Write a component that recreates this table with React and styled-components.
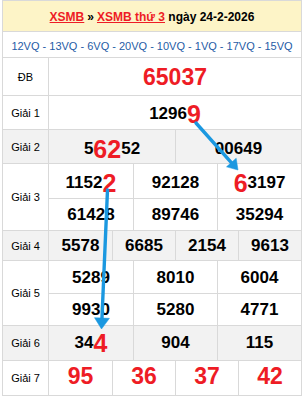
import React from 'react';
import styled, { createGlobalStyle } from 'styled-components';

const Global = createGlobalStyle`
  html, body { margin: 0; padding: 0; background: #fff; }
  body { font-family: "Liberation Sans", Arial, sans-serif; color: #000; }
`;

const BORDER = '#d9d9d9';
const RED = '#ee1c25';

const Page = styled.div`
  position: relative;
  width: 304px;
  height: 396px;
  overflow: hidden;
`;

const Board = styled.div`
  margin-left: 2px;
  width: 300px;
  box-sizing: border-box;
  border: 1px solid ${BORDER};
  border-bottom: none;
`;

const Header = styled.div`
  height: 31px;
  box-sizing: border-box;
  padding-top: 2px;
  background: #fdf4c7;
  border-bottom: 1px solid ${BORDER};
  display: flex;
  align-items: center;
  justify-content: center;
  font-size: 12px;
  font-weight: bold;
  white-space: nowrap;
`;

const Link = styled.a`
  color: ${RED};
  text-decoration: underline;
`;

const Sep = styled.span`
  margin: 0 3px;
`;

const Codes = styled.div`
  height: 26px;
  box-sizing: border-box;
  padding-top: 2px;
  border-bottom: 1px solid ${BORDER};
  display: flex;
  align-items: center;
  justify-content: center;
  font-size: 11px;
  color: #1f5ca6;
  white-space: nowrap;
`;

const Row = styled.div`
  display: flex;
  height: ${p => p.$h}px;
  box-sizing: border-box;
  border-bottom: 1px solid ${BORDER};
  background: ${p => (p.$alt ? '#f2f2f2' : '#fff')};
`;

const Label = styled.div`
  width: 46px;
  flex: none;
  box-sizing: border-box;
  border-right: 1px solid ${BORDER};
  display: flex;
  align-items: center;
  justify-content: center;
  font-size: 11px;
`;

const Body = styled.div`
  flex: 1;
  display: flex;
  flex-direction: column;
`;

const Line = styled.div`
  display: grid;
  grid-template-columns: repeat(${p => p.$cols}, 1fr);
  height: ${p => p.$h}px;
  box-sizing: border-box;
  & + & {
    border-top: 1px solid ${BORDER};
  }
`;

const Cell = styled.div`
  display: flex;
  align-items: center;
  justify-content: center;
  box-sizing: border-box;
  font-size: ${p => (p.$big ? 23 : 17)}px;
  color: ${p => (p.$big ? RED : '#000')};
  font-weight: bold;
  line-height: 20px;
  white-space: nowrap;
  padding-top: ${p => (p.$shift > 0 ? p.$shift : 0)}px;
  padding-bottom: ${p => (p.$shift < 0 ? -p.$shift : 0)}px;
  & + & {
    border-left: 1px solid ${BORDER};
  }
`;

const Hot = styled.span`
  font-size: 25px;
  color: ${RED};
  line-height: 0;
`;

const Overlay = styled.svg`
  position: absolute;
  left: 0;
  top: 0;
  pointer-events: none;
`;

function Num({ v }) {
  const parts = v.split(/(\[[^\]]+\])/).filter(Boolean);
  return (
    <>
      {parts.map((p, i) =>
        p.startsWith('[') ? <Hot key={i}>{p.slice(1, -1)}</Hot> : <span key={i}>{p}</span>
      )}
    </>
  );
}

function Arrow({ x1, y1, x2, y2, len = 10, half = 6.5 }) {
  const dx = x2 - x1;
  const dy = y2 - y1;
  const l = Math.hypot(dx, dy);
  const ux = dx / l;
  const uy = dy / l;
  const bx = x2 - ux * len;
  const by = y2 - uy * len;
  const nx = -uy;
  const ny = ux;
  const pts = `${x2},${y2} ${bx + nx * half},${by + ny * half} ${bx - nx * half},${by - ny * half}`;
  return (
    <g fill="#1b98e0" stroke="#1b98e0">
      <line x1={x1} y1={y1} x2={bx + ux} y2={by + uy} strokeWidth="3.4" strokeLinecap="round" />
      <polygon points={pts} strokeWidth="0.5" strokeLinejoin="round" />
    </g>
  );
}

const prizes = [
  { label: 'ĐB', h: 38, alt: false, big: true, lines: [{ h: 37, shift: 0, vals: ['65037'] }] },
  { label: 'Giải 1', h: 34, alt: false, lines: [{ h: 33, shift: 3, vals: ['1296[9]'] }] },
  { label: 'Giải 2', h: 34, alt: true, lines: [{ h: 33, shift: 5, vals: ['5[62]52', '00649'] }] },
  {
    label: 'Giải 3',
    h: 67,
    alt: false,
    lines: [
      { h: 34, shift: 4, vals: ['1152[2]', '92128', '[6]3197'] },
      { h: 32, shift: 0, vals: ['61428', '89746', '35294'] },
    ],
  },
  { label: 'Giải 4', h: 30, alt: true, lines: [{ h: 29, shift: 1, vals: ['5578', '6685', '2154', '9613'] }] },
  {
    label: 'Giải 5',
    h: 65,
    alt: false,
    lines: [
      { h: 32, shift: 1, vals: ['5289', '8010', '6004'] },
      { h: 32, shift: 0, vals: ['9930', '5280', '4771'] },
    ],
  },
  { label: 'Giải 6', h: 35, alt: true, lines: [{ h: 34, shift: 0, vals: ['34[4]', '904', '115'] }] },
  { label: 'Giải 7', h: 35, alt: false, big: true, lines: [{ h: 34, shift: -5, vals: ['95', '36', '37', '42'] }] },
];

export default function App() {
  return (
    <Page>
      <Global />
      <Board>
        <Header>
          <Link href="#xsmb">XSMB</Link>
          <Sep>»</Sep>
          <Link href="#xsmb-thu-3">XSMB thứ 3</Link>
          &nbsp;ngày 24-2-2026
        </Header>
        <Codes>12VQ - 13VQ - 6VQ - 20VQ - 10VQ - 1VQ - 17VQ - 15VQ</Codes>
        {prizes.map(p => (
          <Row key={p.label} $h={p.h} $alt={p.alt}>
            <Label>{p.label}</Label>
            <Body>
              {p.lines.map((ln, i) => (
                <Line key={i} $h={ln.h} $cols={ln.vals.length}>
                  {ln.vals.map((v, j) => (
                    <Cell key={j} $big={p.big} $shift={ln.shift}>
                      <Num v={v} />
                    </Cell>
                  ))}
                </Line>
              ))}
            </Body>
          </Row>
        ))}
      </Board>
      <Overlay width="304" height="396" viewBox="0 0 304 396">
        <Arrow x1={196} y1={123} x2={238} y2={170} len={10} half={6.5} />
        <Arrow x1={107.5} y1={190} x2={101.5} y2={329} len={11} half={7.5} />
      </Overlay>
    </Page>
  );
}
